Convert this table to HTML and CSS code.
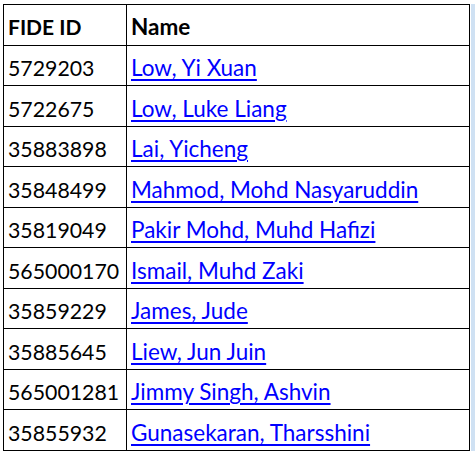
FILE: index.html
```html
<!DOCTYPE html>
<html>
<head>
<meta charset="utf-8">
<link rel="stylesheet" href="styles.css">
</head>
<body>
<div class="sheet">
  <table class="players">
    <thead>
      <tr class="head"><th class="id">FIDE ID</th><th class="name">Name</th></tr>
    </thead>
    <tbody>
      <tr class="r40"><td>5729203</td><td><a href="#">Low, Yi Xuan</a></td></tr>
      <tr class="r41"><td>5722675</td><td><a href="#">Low, Luke Liang</a></td></tr>
      <tr class="r40"><td>35883898</td><td><a href="#">Lai, Yicheng</a></td></tr>
      <tr class="r41"><td>35848499</td><td><a href="#">Mahmod, Mohd Nasyaruddin</a></td></tr>
      <tr class="r40"><td>35819049</td><td><a href="#">Pakir Mohd, Muhd Hafizi</a></td></tr>
      <tr class="r41"><td>565000170</td><td><a href="#">Ismail, Muhd Zaki</a></td></tr>
      <tr class="r40"><td>35859229</td><td><a href="#">James, Jude</a></td></tr>
      <tr class="r41"><td>35885645</td><td><a href="#">Liew, Jun Juin</a></td></tr>
      <tr class="r40"><td>565001281</td><td><a href="#">Jimmy Singh, Ashvin</a></td></tr>
      <tr class="r41"><td>35855932</td><td><a href="#">Gunasekaran, Tharsshini</a></td></tr>
    </tbody>
  </table>
  <div class="strip"></div>
</div>
</body>
</html>
```
FILE: styles.css
```css
html, body {
  margin: 0;
  padding: 0;
  background: #fff;
}
body {
  font-family: Lato, "Open Sans", sans-serif;
  font-size: 22.5px;
  color: #000;
}
.sheet {
  display: flex;
  align-items: stretch;
  padding: 4px 0 0 3px;
}
.players {
  border-collapse: collapse;
  width: 467px;
  table-layout: fixed;
}
.players th,
.players td {
  border: 1px solid #000;
  text-align: left;
  vertical-align: bottom;
  line-height: 24px;
  padding: 0 3px 5px 4px;
  white-space: nowrap;
}
.players td:first-child {
  font-size: 21.3px;
}
.players th {
  font-weight: 700;
  padding-bottom: 6px;
}
.players th.id {
  width: 115px;
  font-size: 21px;
}
.players tr.head { height: 41px; }
.players tr.r40 { height: 40px; }
.players tr.r41 { height: 41px; }
.players a {
  color: #0000ff;
  text-decoration: underline;
  text-decoration-thickness: 2px;
  text-underline-offset: 3px;
}
.strip {
  width: 4px;
  margin-left: 1px;
  background: #cfe1f3;
}
```
